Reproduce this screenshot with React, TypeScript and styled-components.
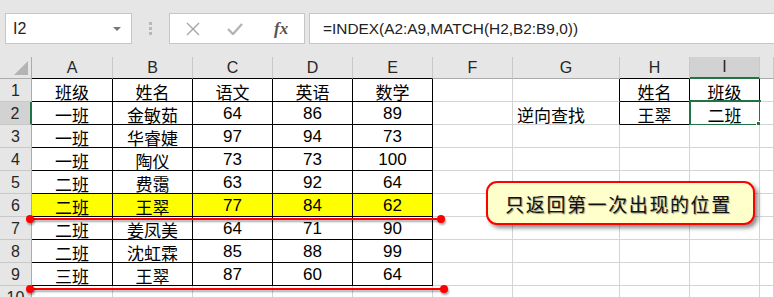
import styled, { createGlobalStyle } from "styled-components";

const GlobalStyle = createGlobalStyle`
  html, body {
    margin: 0;
    padding: 0;
    background: #e6e6e6;
  }
  body {
    font-family: "Liberation Sans", "Noto Sans CJK SC", sans-serif;
  }
`;

const COLS = ["A", "B", "C", "D", "E", "F", "G", "H", "I", ""];
const WIDTHS = [81, 80, 80, 80, 80, 80, 107, 70, 70];

const rows: (string | number)[][] = [
  ["班级", "姓名", "语文", "英语", "数学", "", "", "姓名", "班级"],
  ["一班", "金敏茹", 64, 86, 89, "", "逆向查找", "王翠", "二班"],
  ["一班", "华睿婕", 97, 94, 73, "", "", "", ""],
  ["一班", "陶仪", 73, 73, 100, "", "", "", ""],
  ["二班", "费霭", 63, 92, 64, "", "", "", ""],
  ["二班", "王翠", 77, 84, 62, "", "", "", ""],
  ["二班", "姜凤美", 64, 71, 90, "", "", "", ""],
  ["二班", "沈虹霖", 85, 88, 99, "", "", "", ""],
  ["三班", "王翠", 87, 60, 64, "", "", "", ""],
  ["", "", "", "", "", "", "", "", ""],
];

const Page = styled.div`
  width: 774px;
  height: 297px;
  overflow: hidden;
  background: #e6e6e6;
`;

const FormulaBar = styled.div`
  display: flex;
  align-items: stretch;
  height: 31px;
  padding: 13px 0 13px 5px;
`;

const NameBox = styled.div`
  position: relative;
  width: 127px;
  box-sizing: border-box;
  background: #fff;
  border: 1px solid #c6c6c6;
  display: flex;
  align-items: center;
  padding-left: 7px;
  font-size: 16px;
  color: #222;
`;

const DropArrow = styled.span`
  margin-left: auto;
  margin-right: 10px;
  width: 0;
  height: 0;
  border-left: 4px solid transparent;
  border-right: 4px solid transparent;
  border-top: 4px solid #777;
`;

const Grip = styled.div`
  width: 37px;
  display: flex;
  flex-direction: column;
  align-items: center;
  justify-content: center;
  gap: 2px;
  & > i {
    display: block;
    width: 3px;
    height: 3px;
    background: #b8b8b8;
  }
`;

const FxBox = styled.div`
  width: 136px;
  box-sizing: border-box;
  background: #fff;
  border: 1px solid #c6c6c6;
  display: flex;
  align-items: center;
  padding-left: 16px;
  gap: 27px;
`;

const FxIcon = styled.span`
  font-family: "Liberation Serif", serif;
  font-style: italic;
  font-weight: bold;
  font-size: 17px;
  color: #555;
  margin-left: 4px;
`;

const FormulaInput = styled.div`
  flex: 1;
  margin-left: 4px;
  background: #fff;
  border: 1px solid #c6c6c6;
  border-right: none;
  display: flex;
  align-items: center;
  padding-left: 13px;
  font-size: 15.4px;
  color: #222;
`;

const Sheet = styled.div`
  position: relative;
  display: grid;
  grid-template-columns: 32px ${WIDTHS.map((w) => `${w}px`).join(" ")} 1fr;
  grid-template-rows: 22px repeat(10, 23px);
  background: #fff;
`;

const Corner = styled.div`
  position: relative;
  background: #e6e6e6;
  border-right: 1px solid #ababab;
  border-bottom: 1px solid #ababab;
  box-sizing: border-box;
  &::after {
    content: "";
    position: absolute;
    right: 3px;
    bottom: 3px;
    border-left: 14px solid transparent;
    border-bottom: 14px solid #b4b4b4;
  }
`;

const ColHead = styled.div<{ $active?: boolean; $edge?: boolean }>`
  box-sizing: border-box;
  display: flex;
  align-items: center;
  justify-content: center;
  font-size: 16px;
  color: #262626;
  background: ${(p) => (p.$active ? "#d2d2d2" : "#e6e6e6")};
  border-right: 1px solid #c8c8c8;
  border-bottom: ${(p) =>
    p.$active ? "2px solid #217346" : p.$edge ? "1px solid #000" : "1px solid #ababab"};
`;

const RowHead = styled.div<{ $active?: boolean }>`
  box-sizing: border-box;
  display: flex;
  align-items: center;
  justify-content: center;
  padding-top: 2px;
  font-size: 16px;
  color: #262626;
  background: ${(p) => (p.$active ? "#d2d2d2" : "#e6e6e6")};
  border-bottom: 1px solid #c8c8c8;
  border-right: ${(p) => (p.$active ? "2px solid #217346" : "1px solid #ababab")};
`;

const Cell = styled.div<{ $right?: boolean; $bottom?: boolean; $fill?: string; $left?: boolean }>`
  position: relative;
  box-sizing: border-box;
  display: flex;
  align-items: center;
  justify-content: ${(p) => (p.$left ? "flex-start" : "center")};
  padding: 2px 0 0 ${(p) => (p.$left ? "4px" : "0")};
  font-size: 17px;
  color: #000;
  white-space: nowrap;
  background: ${(p) => p.$fill || "#fff"};
  border-right: 1px solid ${(p) => (p.$right ? "#000" : "#d4d4d4")};
  border-bottom: 1px solid ${(p) => (p.$bottom ? "#000" : "#d4d4d4")};
`;

const Selection = styled.div`
  position: absolute;
  left: -1px;
  top: -2px;
  right: -2px;
  bottom: -2px;
  border: 2px solid #217346;
  pointer-events: none;
  &::after {
    content: "";
    position: absolute;
    right: -4px;
    bottom: -4px;
    width: 5px;
    height: 5px;
    background: #217346;
    border: 1px solid #fff;
  }
`;

const RedLine = styled.div<{ $top: number; $width: number }>`
  position: absolute;
  left: 30px;
  top: ${(p) => p.$top}px;
  width: ${(p) => p.$width}px;
  height: 2px;
  background: #f00;
  box-shadow: 1px 2px 2px rgba(0, 0, 0, 0.35);
  &::before,
  &::after {
    content: "";
    position: absolute;
    top: -3px;
    width: 8px;
    height: 8px;
    border-radius: 50%;
    background: #f00;
    box-shadow: 1px 2px 2px rgba(0, 0, 0, 0.35);
  }
  &::before {
    left: -4px;
  }
  &::after {
    right: -4px;
  }
`;

const Callout = styled.div`
  position: absolute;
  left: 486px;
  top: 124px;
  width: 269px;
  height: 44px;
  box-sizing: border-box;
  border: 2px solid #f00;
  border-radius: 11px;
  background: #ffffcc;
  box-shadow: 3px 3px 4px rgba(0, 0, 0, 0.45);
  display: flex;
  align-items: center;
  justify-content: center;
  padding-right: 4px;
  font-family: "Noto Sans CJK SC", sans-serif;
  font-size: 19px;
  font-weight: 400;
  letter-spacing: 1.6px;
  color: #111;
  text-shadow: 1px 1px 1px rgba(0, 0, 0, 0.4);
`;

function CloseIcon() {
  return (
    <svg width="14" height="14" viewBox="0 0 14 14">
      <path d="M1 1 L13 13 M13 1 L1 13" stroke="#a6a6a6" strokeWidth="1.4" fill="none" />
    </svg>
  );
}

function CheckIcon() {
  return (
    <svg width="16" height="12" viewBox="0 0 16 12">
      <path d="M1 6 L6 11 L15 1" stroke="#b4b4b4" strokeWidth="2.4" fill="none" />
    </svg>
  );
}

function App() {
  return (
    <Page>
      <GlobalStyle />
      <FormulaBar>
        <NameBox>
          I2
          <DropArrow />
        </NameBox>
        <Grip>
          <i />
          <i />
          <i />
        </Grip>
        <FxBox>
          <CloseIcon />
          <CheckIcon />
          <FxIcon>fx</FxIcon>
        </FxBox>
        <FormulaInput>=INDEX(A2:A9,MATCH(H2,B2:B9,0))</FormulaInput>
      </FormulaBar>

      <Sheet>
        <Corner />
        {COLS.map((c, i) => (
          <ColHead key={i} $active={c === "I"} $edge={i <= 4 || c === "H"}>
            {c}
          </ColHead>
        ))}
        {rows.map((row, r) => {
          const n = r + 1;
          return [
            <RowHead key={`h${n}`} $active={n === 2}>
              {n}
            </RowHead>,
            ...row.map((v, c) => {
              const table = c <= 4 && n <= 9;
              const lookup = (c === 7 || c === 8) && n <= 2;
              const edgeG = c === 6 && n <= 2;
              return (
                <Cell
                  key={`${n}-${c}`}
                  $right={table || lookup || edgeG}
                  $bottom={table || lookup}
                  $fill={n === 6 && c <= 4 ? "#ffff00" : undefined}
                  $left={c === 6}
                >
                  {v}
                  {n === 2 && c === 8 ? <Selection /> : null}
                </Cell>
              );
            }),
            <Cell key={`j${n}`} />,
          ];
        })}
        <RedLine $top={161} $width={411} />
        <RedLine $top={231} $width={414} />
        <Callout>只返回第一次出现的位置</Callout>
      </Sheet>
    </Page>
  );
}

export default App;
